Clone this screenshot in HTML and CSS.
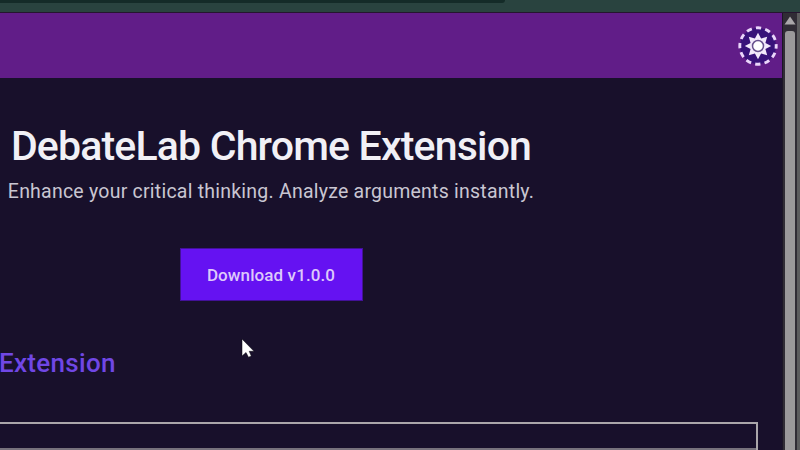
FILE: index.html
```html
<!DOCTYPE html>
<html lang="en">
<head>
<meta charset="utf-8">
<title>DebateLab Chrome Extension</title>
<link rel="stylesheet" href="styles.css">
</head>
<body>
<div class="tabstrip"><div class="tabs"></div></div>
<div class="viewport">
  <div class="page">
    <header class="topbar">
      <svg class="theme" viewBox="0 0 40 40" width="40" height="40">
        <circle cx="20" cy="20" r="18" fill="#38127a"/>
        <circle cx="20" cy="20" r="18.2" fill="none" stroke="#ead5fa" stroke-width="2.9" stroke-dasharray="5.4 4.129" stroke-dashoffset="2.7"/>
        <path fill="#f2e9fb" d="M20 6.8 23.1 12.6 29.2 10.8 27.4 16.9 33.2 20 27.4 23.1 29.2 29.2 23.1 27.4 20 33.2 16.9 27.4 10.8 29.2 12.6 23.1 6.8 20 12.6 16.9 10.8 10.8 16.9 12.6Z"/>
        <circle cx="20" cy="20" r="5.5" fill="#fff" stroke="#67518e" stroke-width="1.5"/>
      </svg>
    </header>
    <main class="content">
      <h1 class="title">DebateLab Chrome Extension</h1>
      <p class="tagline">Enhance your critical thinking. Analyze arguments instantly.</p>
      <a class="download"><span>Download v1.0.0</span></a>
      <h2 class="section">Extension</h2>
      <div class="panel"><div class="panel-body"></div></div>
    </main>
  </div>
  <div class="scrollbar">
    <svg class="arrow" viewBox="0 0 12 9" width="12" height="9"><path d="M6 0.5 11.5 8.5H0.5Z" fill="#aaa7aa"/></svg>
    <div class="thumb"></div>
  </div>
</div>
<svg class="cursor" viewBox="0 0 14 20" width="14" height="20"><path d="M1 1V18L5 14.5 7.5 19.2 10.3 18 8.2 13.3H13Z" fill="#fff" stroke="#08060f" stroke-width=".5"/></svg>
</body>
</html>
```
FILE: styles.css
```css
* { box-sizing: border-box; margin: 0; padding: 0; }
body {
  width: 800px;
  height: 450px;
  overflow: hidden;
  display: flex;
  flex-direction: column;
  background: #18102b;
  font-family: Roboto, "Noto Sans", sans-serif;
}
.tabstrip { height: 13px; flex: none; background: #29433f; border-bottom: 1px solid #25152f; }
.tabs { width: 505px; height: 3px; background: #142b28; border-bottom-right-radius: 3px; }
.viewport { flex: 1; min-height: 0; display: flex; }
.page { width: 782px; overflow: hidden; }
.topbar {
  height: 65px;
  background: #611d88;
  display: flex;
  align-items: center;
  justify-content: flex-end;
  padding-right: 4px;
}
.content {
  width: 974px;
  margin-left: -216px;
  display: flex;
  flex-direction: column;
  align-items: center;
}
.title {
  margin-top: 44px;
  font: 500 41px/48px Roboto, sans-serif;
  letter-spacing: -0.82px;
  color: #f1f0f6;
  white-space: nowrap;
}
.tagline {
  margin-top: 10px;
  font: 400 19.5px/24px Roboto, sans-serif;
  letter-spacing: 0.23px;
  color: #c9c6d2;
  white-space: nowrap;
}
.download {
  margin-top: 44px;
  width: 183px;
  height: 53px;
  display: flex;
  align-items: center;
  justify-content: center;
  background: #6512f2;
  border: 1px solid #431199;
  color: #ddc9fb;
  font: 500 17px/24px Roboto, sans-serif;
  letter-spacing: 0.1px;
  white-space: nowrap;
}
.section {
  align-self: flex-start;
  margin: 47px 0 0 215px;
  font: 500 26px/30px Roboto, sans-serif;
  letter-spacing: 0.3px;
  color: #7047e5;
}
.panel {
  margin-top: 44px;
  width: 974px;
  height: 100px;
  border: 2px solid #aaa6aa;
}
.panel-body { margin-top: 24px; height: 74px; border-top: 2px solid #77727c; }
.scrollbar {
  width: 18px;
  background: #302c35;
  border-left: 1px solid #1b1526;
  border-right: 3px solid #5c5c5e;
  display: flex;
  flex-direction: column;
  align-items: center;
}
.arrow { margin-top: 3px; flex: none; }
.thumb { margin-top: 6px; width: 10px; flex: 1; background: #9b999b; border-radius: 3px 3px 0 0; }
.cursor { position: absolute; left: 241px; top: 338px; }
```
